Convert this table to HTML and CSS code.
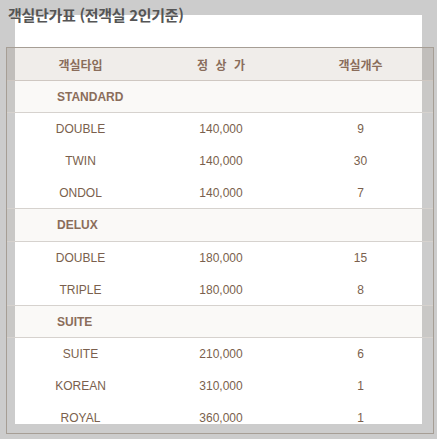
FILE: index.html
```html
<!DOCTYPE html>
<html lang="ko">
<head>
<meta charset="utf-8">
<link rel="stylesheet" href="styles.css">
</head>
<body>
<div class="panel">
  <h1 class="title">객실단가표 (전객실 2인기준)</h1>
  <table class="rates">
    <colgroup>
      <col class="c1"><col class="c2"><col class="c3">
    </colgroup>
    <thead>
      <tr><th>객실타입</th><th class="spaced">정 상 가</th><th>객실개수</th></tr>
    </thead>
    <tbody>
      <tr class="cat"><td colspan="3">STANDARD</td></tr>
      <tr><td>DOUBLE</td><td>140,000</td><td>9</td></tr>
      <tr><td>TWIN</td><td>140,000</td><td>30</td></tr>
      <tr class="end"><td>ONDOL</td><td>140,000</td><td>7</td></tr>
      <tr class="cat tall"><td colspan="3">DELUX</td></tr>
      <tr><td>DOUBLE</td><td>180,000</td><td>15</td></tr>
      <tr class="end"><td>TRIPLE</td><td>180,000</td><td>8</td></tr>
      <tr class="cat"><td colspan="3">SUITE</td></tr>
      <tr><td>SUITE</td><td>210,000</td><td>6</td></tr>
      <tr><td>KOREAN</td><td>310,000</td><td>1</td></tr>
      <tr class="last"><td>ROYAL</td><td>360,000</td><td>1</td></tr>
    </tbody>
  </table>
</div>
</body>
</html>
```
FILE: styles.css
```css
html, body {
  margin: 0;
  padding: 0;
}
body {
  background: #cccccc;
  width: 437px;
  height: 439px;
  overflow: hidden;
  font-family: "Liberation Sans", "Noto Sans CJK KR", sans-serif;
}
.panel {
  display: flow-root;
  margin: 15px 0 0 15px;
  width: 407px;
  height: 409px;
  background: #ffffff;
}
.title {
  margin: -15px 0 0 -7px;
  height: 47px;
  font-family: "Noto Sans CJK KR", sans-serif;
  font-size: 15px;
  font-weight: 700;
  line-height: 29px;
  color: #555555;
  letter-spacing: -0.3px;
}
.rates {
  margin-left: -9px;
  width: 428px;
  border-collapse: separate;
  border-spacing: 0;
  border: 1px solid #a69e95;
  table-layout: fixed;
  color: #7a5f4d;
  font-size: 12px;
}
.c1 { width: 147px; }
.c2 { width: 134px; }
.c3 { width: 145px; }
.rates th, .rates td {
  padding: 0;
  text-align: center;
  vertical-align: middle;
}
.rates th {
  box-sizing: content-box;
  height: 32px;
  background: rgba(90, 55, 25, 0.09);
  border-bottom: 1px solid #cfc8c2;
  font-family: "Noto Sans CJK KR", sans-serif;
  font-weight: 700;
  color: #8a6d5b;
}
.spaced { word-spacing: 4px; }
.rates td {
  height: 32px;
}
.rates tr.end td,
.rates tr.last td {
  height: 31px;
}
.rates tr.end td {
  border-bottom: 1px solid #d6d2ce;
}
.rates tr.cat td {
  height: 31px;
  text-align: left;
  padding-left: 50px;
  font-weight: 700;
  color: #8a6d5b;
  background: rgba(120, 90, 60, 0.04);
  border-bottom: 1px solid #d6d2ce;
}
.rates tr.cat.tall td {
  height: 32px;
}
```
